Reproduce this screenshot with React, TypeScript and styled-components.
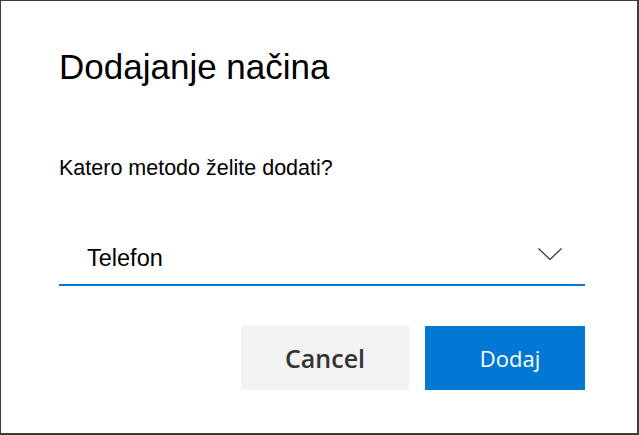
import React from 'react';
import styled, { createGlobalStyle } from 'styled-components';

const GlobalStyle = createGlobalStyle`
  html, body {
    margin: 0;
    padding: 0;
    background: #ffffff;
  }
  body {
    font-family: "Liberation Sans", Arial, sans-serif;
  }
`;

const Dialog = styled.div`
  box-sizing: border-box;
  width: 639px;
  height: 435px;
  background: #ffffff;
  border: 1px solid #3c3c3c;
  border-right-width: 2px;
  border-bottom-width: 2px;
  padding: 0 52px 0 58px;
  display: flex;
  flex-direction: column;
`;

const Title = styled.h1`
  margin: 48px 0 0 0;
  font-size: 35px;
  line-height: 1;
  font-weight: 400;
  color: #000000;
`;

const Label = styled.div`
  margin-top: 74px;
  font-size: 21.5px;
  line-height: 1;
  color: #000000;
`;

const Select = styled.div`
  box-sizing: border-box;
  margin-top: 50px;
  height: 56px;
  display: flex;
  align-items: center;
  justify-content: space-between;
  padding: 0 23px 0 28px;
  border-bottom: 2px solid #0078d4;
`;

const SelectValue = styled.span`
  margin-top: 4px;
  font-size: 23.5px;
  line-height: 1;
  color: #000000;
`;

const Chevron = styled.svg`
  width: 24px;
  height: 12px;
  margin-top: -6px;
`;

const ButtonRow = styled.div`
  margin-top: 40px;
  display: flex;
  justify-content: flex-end;
  gap: 16px;
`;

const Button = styled.button<{ $primary?: boolean }>`
  height: 64px;
  width: ${(p) => (p.$primary ? '160px' : '168px')};
  border: none;
  padding: ${(p) => (p.$primary ? '0 0 0 10px' : '0')};
  background: ${(p) => (p.$primary ? '#0078d4' : '#f2f2f2')};
  color: ${(p) => (p.$primary ? '#ffffff' : '#333333')};
  font-family: "Open Sans", "Liberation Sans", sans-serif;
  font-size: ${(p) => (p.$primary ? '22px' : '25px')};
  font-weight: ${(p) => (p.$primary ? 400 : 600)};
  cursor: pointer;
`;

const App = () => {
  return (
    <>
      <GlobalStyle />
      <Dialog>
        <Title>Dodajanje načina</Title>
        <Label>Katero metodo želite dodati?</Label>
        <Select>
          <SelectValue>Telefon</SelectValue>
          <Chevron viewBox="0 0 24 12" fill="none">
            <path d="M0.5 0.5 L12 11.5 L23.5 0.5" stroke="#333333" strokeWidth="1.2" />
          </Chevron>
        </Select>
        <ButtonRow>
          <Button>Cancel</Button>
          <Button $primary>Dodaj</Button>
        </ButtonRow>
      </Dialog>
    </>
  );
};

export default App;
